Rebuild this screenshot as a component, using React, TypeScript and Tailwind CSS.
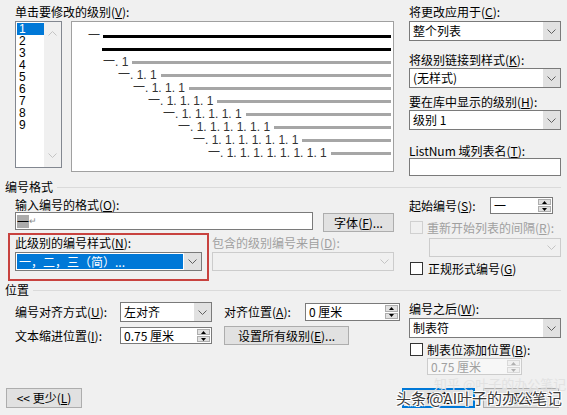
import type { ReactNode } from "react";
import clsx from "clsx";

const Acc = ({ text, k, tail = "):" }: { text: string; k: string; tail?: string }) => (
  <>
    {text}(<span className="underline underline-offset-[1px]">{k}</span>
    {tail}
  </>
);

const Chevron = ({ up, color = "#606060" }: { up?: boolean; color?: string }) => (
  <svg width="9" height="5" viewBox="0 0 9 5">
    <path
      d={up ? "M0.5 4.5L4.5 0.5L8.5 4.5" : "M0.5 0.5L4.5 4.5L8.5 0.5"}
      fill="none"
      stroke={color}
      strokeWidth="1"
    />
  </svg>
);

const Tri = ({ up, color }: { up?: boolean; color: string }) => (
  <svg width="5" height="3" viewBox="0 0 5 3">
    <polygon points={up ? "0,3 2.5,0 5,3" : "0,0 2.5,3 5,0"} fill={color} />
  </svg>
);

type FieldProps = { value?: ReactNode; className?: string; disabled?: boolean; focused?: boolean };

const Combo = ({ value, className, disabled, focused }: FieldProps) => (
  <div
    className={clsx(
      "flex border",
      disabled ? "border-[#cccccc] bg-[#f0f0f0]" : "border-[#7a7a7a] bg-white",
      className
    )}
  >
    <div className="flex-1 min-w-0 p-px">
      <div
        className={clsx(
          "h-full flex items-center px-[2px] whitespace-nowrap",
          focused && "bg-[#0078d7] text-white"
        )}
      >
        {value}
      </div>
    </div>
    <div
      className={clsx(
        "w-[17px] flex items-center justify-center",
        disabled ? "bg-[#f0f0f0]" : "bg-[#e1e1e1]"
      )}
    >
      <Chevron color={disabled ? "#c4c4c4" : "#606060"} />
    </div>
  </div>
);

const Spin = ({ value, className, disabled }: FieldProps) => (
  <div
    className={clsx(
      "flex border",
      disabled ? "border-[#cccccc] bg-[#f7f7f7] text-[#a0a0a0]" : "border-[#7a7a7a] bg-white",
      className
    )}
  >
    <div className="flex-1 flex items-center pl-[3px] whitespace-nowrap">{value}</div>
    <div className="w-[15px] flex flex-col p-px gap-px">
      <div
        className={clsx(
          "flex-1 flex items-center justify-center border",
          disabled ? "border-[#d9d9d9] bg-[#f0f0f0]" : "border-[#adadad] bg-[#e1e1e1]"
        )}
      >
        <Tri up color={disabled ? "#b0b0b0" : "#000000"} />
      </div>
      <div
        className={clsx(
          "flex-1 flex items-center justify-center border",
          disabled ? "border-[#d9d9d9] bg-[#f0f0f0]" : "border-[#adadad] bg-[#e1e1e1]"
        )}
      >
        <Tri color={disabled ? "#b0b0b0" : "#000000"} />
      </div>
    </div>
  </div>
);

const Btn = ({ children, className, def }: { children: ReactNode; className?: string; def?: boolean }) => (
  <div
    className={clsx(
      "flex items-center justify-center bg-[#e1e1e1] whitespace-nowrap",
      def ? "border-2 border-[#0078d7]" : "border border-[#adadad]",
      className
    )}
  >
    {children}
  </div>
);

const Check = ({ disabled }: { disabled?: boolean }) => (
  <div
    className={clsx(
      "w-[13px] h-[13px] border",
      disabled ? "border-[#d0d0d0] bg-[#f0f0f0]" : "border-[#333333] bg-white"
    )}
  />
);

const Header = ({ title, className }: { title: string; className?: string }) => (
  <div className={clsx("flex items-center h-[14px] pl-[5px] pr-[6px]", className)}>
    <span>{title}</span>
    <div className="ml-[4px] flex-1 h-px bg-[#dadada]" />
  </div>
);

const LEVELS = [1, 2, 3, 4, 5, 6, 7, 8, 9];

const PREVIEW_ROWS = [
  { pl: "pl-[31px]", t: "一. 1" },
  { pl: "pl-[46px]", t: "一. 1. 1" },
  { pl: "pl-[61px]", t: "一. 1. 1. 1" },
  { pl: "pl-[76px]", t: "一. 1. 1. 1. 1" },
  { pl: "pl-[91px]", t: "一. 1. 1. 1. 1. 1" },
  { pl: "pl-[106px]", t: "一. 1. 1. 1. 1. 1. 1" },
  { pl: "pl-[121px]", t: "一. 1. 1. 1. 1. 1. 1. 1" },
  { pl: "pl-[136px]", t: "一. 1. 1. 1. 1. 1. 1. 1. 1" },
];

const LevelList = () => (
  <div className="w-[47px] h-[147px] border border-[#828790] bg-white flex">
    <div className="flex-1 pt-px pl-px font-['Liberation_Sans',sans-serif]">
      {LEVELS.map((n) => (
        <div
          key={n}
          className={clsx(
            "h-[12px] leading-[12px] pl-[2px]",
            n === 1 && "bg-[#0078d7] text-white"
          )}
        >
          {n}
        </div>
      ))}
    </div>
    <div className="w-[17px] bg-[#f0f0f0] flex flex-col justify-between items-center py-[9px]">
      <Chevron up color="#c4c4c4" />
      <Chevron color="#c4c4c4" />
    </div>
  </div>
);

const Preview = () => (
  <div className="ml-[9px] w-[323px] h-[151px] border border-[#a0a0a0] bg-white pt-[8px] pr-[2px] leading-[13px] text-[#333333] font-['Liberation_Sans','Noto_Sans_CJK_SC',sans-serif]">
    <div className="flex items-center h-[13px] pl-[16px]">
      <span>一</span>
      <div className="ml-[3px] flex-1 h-[3px] bg-black" />
    </div>
    <div className="flex items-center h-[13px] pl-[30px]">
      <div className="flex-1 h-[3px] bg-black" />
    </div>
    {PREVIEW_ROWS.map((r) => (
      <div key={r.pl} className={clsx("flex items-center h-[13px]", r.pl)}>
        <span className="whitespace-nowrap">{r.t}</span>
        <div className="ml-[4px] flex-1 h-[3px] bg-[#a6a6a6]" />
      </div>
    ))}
  </div>
);

const App = () => {
  return (
    <div className="relative w-[567px] h-[415px] overflow-hidden bg-[#f0f0f0] text-[12px] leading-[14px] text-black font-['Noto_Sans_CJK_SC',sans-serif]">
      {/* levels + preview | apply-to column */}
      <div className="flex pt-[5px]">
        <div className="ml-[15px] w-[379px]">
          <div className="h-[16px]">
            <Acc text="单击要修改的级别" k="V" />
          </div>
          <div className="flex">
            <LevelList />
            <Preview />
          </div>
        </div>
        <div className="ml-[15px] w-[152px]">
          <div className="h-[16px]">
            <Acc text="将更改应用于" k="C" />
          </div>
          <Combo value="整个列表" className="h-[20px]" />
          <div className="mt-[12px] h-[15px]">
            <Acc text="将级别链接到样式" k="K" />
          </div>
          <Combo value="(无样式)" className="h-[20px]" />
          <div className="mt-[7px] h-[15px]">
            <Acc text="要在库中显示的级别" k="H" />
          </div>
          <Combo value="级别 1" className="h-[20px]" />
          <div className="mt-[14px] h-[14px]">
            <Acc text="ListNum 域列表名" k="T" />
          </div>
          <div className="h-[18px] border border-[#7a7a7a] bg-white" />
        </div>
      </div>

      {/* 编号格式 */}
      <Header title="编号格式" className="mt-[4px]" />
      <div className="flex">
        <div className="w-[394px]">
          <div className="mt-[4px] ml-[15px] h-[14px]">
            <Acc text="输入编号的格式" k="O" />
          </div>
          <div className="flex items-start ml-[15px]">
            <div className="w-[298px] h-[18px] border border-[#7a7a7a] bg-white flex items-center pl-px">
              <span className="bg-[#ababab] leading-[13px]">一</span>
              <span className="text-[9px] text-[#8a8a8a] leading-[10px]">↵</span>
            </div>
            <Btn className="ml-[10px] w-[71px] h-[19px] mt-px">
              <Acc text="字体" k="F" tail=")..." />
            </Btn>
          </div>
          <div className="flex mt-px">
            <div className="ml-[8px] w-[201px] h-[48px] border-2 border-[#c8423f] pt-px pl-[5px]">
              <div className="h-[14px]">
                <Acc text="此级别的编号样式" k="N" />
              </div>
              <Combo value="一，二，三（简）..." focused className="mt-[2px] w-[187px] h-[19px]" />
            </div>
            <div className="ml-[3px] flex-1 pt-[3px]">
              <div className="h-[14px] text-[#a0a0a0]">
                <Acc text="包含的级别编号来自" k="D" />
              </div>
              <Combo disabled className="mt-[2px] h-[19px]" />
            </div>
          </div>
        </div>
        <div className="ml-[15px] w-[152px]">
          <div className="mt-[3px] h-[17px] flex items-center">
            <div className="w-[81px]">
              <Acc text="起始编号" k="S" />
            </div>
            <Spin value="一" className="w-[63px] h-[17px]" />
          </div>
          <div className="mt-[7px] h-[13px] flex items-center">
            <div className="ml-px">
              <Check disabled />
            </div>
            <span className="ml-[4px] text-[#a0a0a0] whitespace-nowrap">
              <Acc text="重新开始列表的间隔" k="R" />
            </span>
          </div>
          <Combo disabled className="mt-[4px] ml-[20px] w-[132px] h-[19px]" />
          <div className="mt-[5px] h-[13px] flex items-center">
            <div className="ml-px">
              <Check />
            </div>
            <span className="ml-[5px]">
              <Acc text="正规形式编号" k="G" tail=")" />
            </span>
          </div>
        </div>
      </div>

      {/* 位置 */}
      <Header title="位置" className="mt-[2px]" />
      <div className="flex">
        <div className="w-[400px]">
          <div className="mt-[5px] h-[20px] flex items-center">
            <div className="ml-[15px] w-[105px]">
              <Acc text="编号对齐方式" k="U" />
            </div>
            <Combo value="左对齐" className="w-[92px] h-[20px]" />
            <div className="ml-[12px] w-[81px]">
              <Acc text="对齐位置" k="A" />
            </div>
            <Spin value="0 厘米" className="w-[95px] h-[18px]" />
          </div>
          <div className="mt-[4px] h-[19px] flex items-center">
            <div className="ml-[15px] w-[105px]">
              <Acc text="文本缩进位置" k="I" />
            </div>
            <Spin value="0.75 厘米" className="w-[92px] h-[17px]" />
            <Btn className="ml-[12px] w-[125px] h-[19px]">
              <Acc text="设置所有级别" k="E" tail=")..." />
            </Btn>
          </div>
        </div>
        <div className="ml-[9px] w-[152px]">
          <div className="mt-[5px] h-[14px]">
            <Acc text="编号之后" k="W" />
          </div>
          <Combo value="制表符" className="mt-[2px] h-[20px]" />
          <div className="mt-[5px] h-[13px] flex items-center">
            <div className="ml-px">
              <Check />
            </div>
            <span className="ml-[4px] whitespace-nowrap">
              <Acc text="制表位添加位置" k="B" />
            </span>
          </div>
          <Spin value="0.75 厘米" disabled className="mt-[2px] ml-[18px] w-[95px] h-[17px]" />
        </div>
      </div>

      {/* buttons */}
      <div className="mt-[13px] h-[20px] flex">
        <Btn className="ml-[6px] w-[76px]">
          {"<< 更少("}
          <span className="underline underline-offset-[1px]">L</span>)
        </Btn>
        <Btn def className="ml-auto w-[73px]">
          确定
        </Btn>
        <Btn className="ml-[8px] mr-[8px] w-[76px]">取消</Btn>
      </div>

      {/* watermarks over the screenshot */}
      <div className="absolute left-[434px] top-[377px] text-[13px] leading-[14px] text-[#e2e2e2] whitespace-nowrap">
        知乎 @叶子的办公笔记
      </div>
      <div className="absolute left-[396px] top-[389px] text-[15px] leading-[18px] text-[#3a3a3a] whitespace-nowrap [text-shadow:1px_1px_0_#fff,-1px_-1px_0_#fff,1px_-1px_0_#fff,-1px_1px_0_#fff]">
        头条 @AI叶子的办公笔记
      </div>
    </div>
  );
};

export default App;
